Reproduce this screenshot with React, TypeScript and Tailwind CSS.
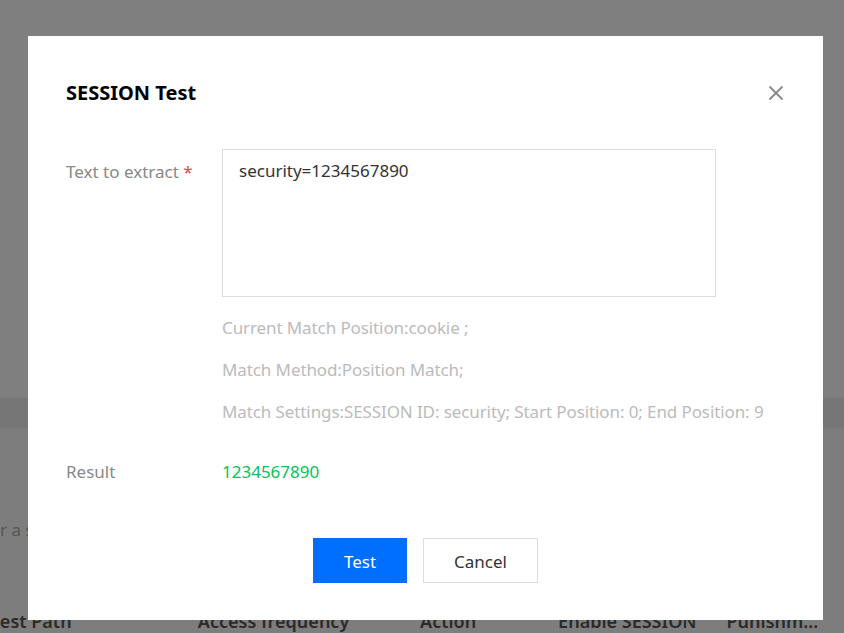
import { X } from 'lucide-react'

const hints = [
  'Current Match Position:cookie ;',
  'Match Method:Position Match;',
  'Match Settings:SESSION ID: security; Start Position: 0; End Position: 9',
]

const columns = [
  { label: 'Request Path', width: 'w-[248px] -ml-[45px]' },
  { label: 'Access frequency', width: 'w-[227px]' },
  { label: 'Action', width: 'w-[141px]' },
  { label: 'Enable SESSION', width: 'w-[172px]' },
  { label: 'Punishm...', width: 'w-[120px]' },
]

function BackgroundPage() {
  return (
    <div className="flex h-[633px] flex-col overflow-hidden bg-white font-['Noto_Sans',sans-serif]">
      <div className="h-[398px] shrink-0 bg-white" />
      <div className="h-[30px] shrink-0 bg-[#ececec]" />
      <div className="flex flex-1 flex-col bg-[#fbfbfb]">
        <p className="mt-[90px] whitespace-nowrap text-[17px] leading-[24px] text-[#aaa]">r a session rule first</p>
        <div className="mt-[67px] flex whitespace-nowrap text-[18px] font-semibold leading-[24px] text-[#555]">
          {columns.map((c) => (
            <div key={c.label} className={c.width}>
              {c.label}
            </div>
          ))}
        </div>
      </div>
    </div>
  )
}

export default function App() {
  return (
    <div className="relative h-[633px] w-[844px] overflow-hidden">
      <BackgroundPage />
      <div className="absolute inset-0 bg-black/50" />

      {/* Dialog */}
      <div className="absolute left-[28px] top-[36px] flex h-[584px] w-[795px] flex-col bg-white px-[38px] pt-[45px] font-['Noto_Sans',sans-serif] text-[17px] leading-[24px]">
        <div className="flex h-[24px] items-center justify-between">
          <h2 className="text-[20px] font-bold text-black">SESSION Test</h2>
          <button className="-mr-[3px] flex h-[24px] w-[24px] items-center justify-center text-[#888]">
            <X className="h-[26px] w-[26px]" strokeWidth={1.8} />
          </button>
        </div>

        <div className="mt-[44px] grid grid-cols-[156px_1fr]">
          <label className="pt-[11px] text-[#888]">
            Text to extract <span className="text-[#e54545]">*</span>
          </label>
          <div className="flex flex-col">
            <textarea
              className="h-[148px] w-[494px] resize-none border border-[#dddddd] px-[16px] pt-[9px] leading-[24px] text-[#333] outline-none"
              defaultValue="security=1234567890"
            />
            <div className="mt-[19px] flex flex-col gap-[18px]">
              {hints.map((h) => (
                <p key={h} className="whitespace-nowrap tracking-[-0.1px] text-[#bbb]">
                  {h}
                </p>
              ))}
            </div>
          </div>

          <span className="mt-[36px] text-[#888]">Result</span>
          <span className="mt-[36px] text-[#0abf5b]">1234567890</span>
        </div>

        <div className="mt-[54px] flex justify-center gap-[16px]">
          <button className="h-[45px] w-[94px] bg-[#006eff] pt-[3px] text-white">Test</button>
          <button className="h-[45px] w-[115px] border border-[#dddddd] bg-white pt-[3px] text-[#333]">Cancel</button>
        </div>
      </div>
    </div>
  )
}
